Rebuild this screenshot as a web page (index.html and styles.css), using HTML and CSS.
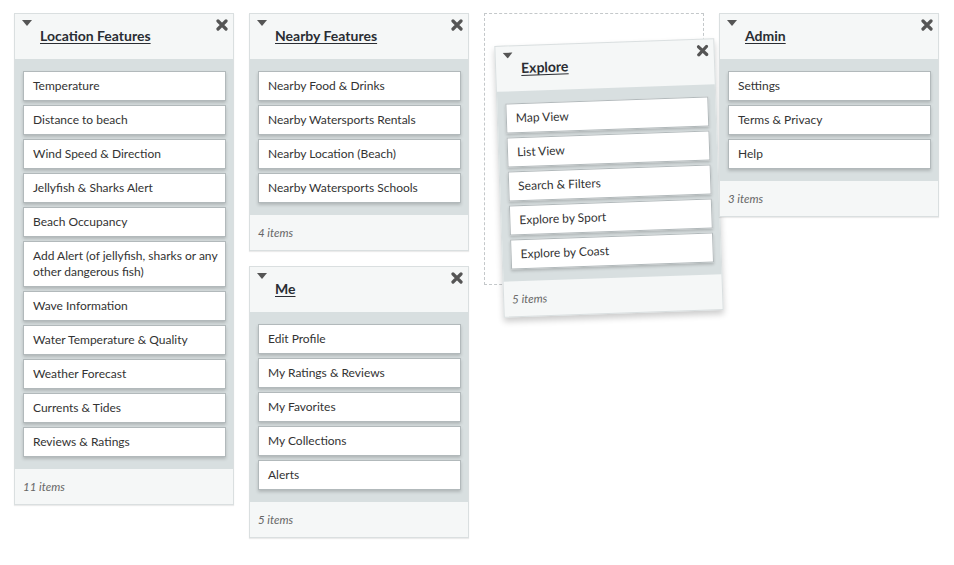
FILE: index.html
```html
<!DOCTYPE html>
<html lang="en">

<head>
    <meta charset="UTF-8">
    <meta name="viewport" content="width=device-width, initial-scale=1.0">
    <title>Beach App - Feature Board</title>
    <link rel="stylesheet" href="styles.css">
</head>

<body>
    <div class="board">
        <div class="column">
            <div class="card">
                <div class="card-head">
                    <svg class="caret" width="10" height="6" viewBox="0 0 10 6"><path d="M0 0H10L5 6Z" /></svg>
                    <a href="#" class="card-title">Location Features</a>
                    <svg class="close" width="12" height="12" viewBox="0 0 12 12"><path d="M2 2L10 10M10 2L2 10" /></svg>
                </div>
                <div class="card-body">
                    <div class="item">Temperature</div>
                    <div class="item">Distance to beach</div>
                    <div class="item">Wind Speed &amp; Direction</div>
                    <div class="item">Jellyfish &amp; Sharks Alert</div>
                    <div class="item">Beach Occupancy</div>
                    <div class="item">Add Alert (of jellyfish, sharks or any other dangerous fish)</div>
                    <div class="item">Wave Information</div>
                    <div class="item">Water Temperature &amp; Quality</div>
                    <div class="item">Weather Forecast</div>
                    <div class="item">Currents &amp; Tides</div>
                    <div class="item">Reviews &amp; Ratings</div>
                </div>
                <div class="card-foot">11 items</div>
            </div>
        </div>

        <div class="column">
            <div class="card">
                <div class="card-head">
                    <svg class="caret" width="10" height="6" viewBox="0 0 10 6"><path d="M0 0H10L5 6Z" /></svg>
                    <a href="#" class="card-title">Nearby Features</a>
                    <svg class="close" width="12" height="12" viewBox="0 0 12 12"><path d="M2 2L10 10M10 2L2 10" /></svg>
                </div>
                <div class="card-body">
                    <div class="item">Nearby Food &amp; Drinks</div>
                    <div class="item">Nearby Watersports Rentals</div>
                    <div class="item">Nearby Location (Beach)</div>
                    <div class="item">Nearby Watersports Schools</div>
                </div>
                <div class="card-foot">4 items</div>
            </div>

            <div class="card">
                <div class="card-head">
                    <svg class="caret" width="10" height="6" viewBox="0 0 10 6"><path d="M0 0H10L5 6Z" /></svg>
                    <a href="#" class="card-title">Me</a>
                    <svg class="close" width="12" height="12" viewBox="0 0 12 12"><path d="M2 2L10 10M10 2L2 10" /></svg>
                </div>
                <div class="card-body">
                    <div class="item">Edit Profile</div>
                    <div class="item">My Ratings &amp; Reviews</div>
                    <div class="item">My Favorites</div>
                    <div class="item">My Collections</div>
                    <div class="item">Alerts</div>
                </div>
                <div class="card-foot">5 items</div>
            </div>
        </div>

        <div class="column">
            <div class="placeholder"></div>
            <!-- card being dragged -->
            <div class="card dragging">
                <div class="card-head">
                    <svg class="caret" width="10" height="6" viewBox="0 0 10 6"><path d="M0 0H10L5 6Z" /></svg>
                    <a href="#" class="card-title">Explore</a>
                    <svg class="close" width="12" height="12" viewBox="0 0 12 12"><path d="M2 2L10 10M10 2L2 10" /></svg>
                </div>
                <div class="card-body">
                    <div class="item">Map View</div>
                    <div class="item">List View</div>
                    <div class="item">Search &amp; Filters</div>
                    <div class="item">Explore by Sport</div>
                    <div class="item">Explore by Coast</div>
                </div>
                <div class="card-foot">5 items</div>
            </div>
        </div>

        <div class="column">
            <div class="card">
                <div class="card-head">
                    <svg class="caret" width="10" height="6" viewBox="0 0 10 6"><path d="M0 0H10L5 6Z" /></svg>
                    <a href="#" class="card-title">Admin</a>
                    <svg class="close" width="12" height="12" viewBox="0 0 12 12"><path d="M2 2L10 10M10 2L2 10" /></svg>
                </div>
                <div class="card-body">
                    <div class="item">Settings</div>
                    <div class="item">Terms &amp; Privacy</div>
                    <div class="item">Help</div>
                </div>
                <div class="card-foot">3 items</div>
            </div>
        </div>
    </div>
</body>

</html>
```

FILE: styles.css
```css
body {
    margin: 0;
    font-family: 'Lato', 'Open Sans', sans-serif;
    background: #fff;
    color: #333;
}

.board {
    display: flex;
    align-items: flex-start;
    gap: 15px;
    padding: 13px 14px;
}

.column {
    position: relative;
    width: 220px;
    display: flex;
    flex-direction: column;
    gap: 15px;
}

.card {
    background: #f5f7f7;
    border: 1px solid #dadfe0;
    box-shadow: 0 1px 1px rgba(0, 0, 0, 0.08);
}

.card-head {
    display: flex;
    align-items: flex-start;
    height: 45px;
    box-sizing: border-box;
    padding: 5px 5px 0 7px;
}

.caret {
    margin-top: 1px;
    fill: #555;
}

.card-title {
    margin: 8px 0 0 8px;
    font-size: 14px;
    line-height: 18px;
    font-weight: bold;
    color: #2a2d33;
    text-decoration: underline;
    text-underline-offset: 2px;
}

.close {
    margin-left: auto;
    stroke: #555;
    stroke-width: 3.2;
    stroke-linecap: round;
}

.card-body {
    display: flex;
    flex-direction: column;
    gap: 4px;
    background: #d8dfe0;
    padding: 12px 7px 12px 8px;
}

.item {
    background: #fff;
    border: 1px solid #b2b9bb;
    box-shadow: 0 2px 3px rgba(0, 0, 0, 0.18);
    padding: 6px 5px 6px 9px;
    font-size: 12px;
    line-height: 16px;
    color: #333;
}

.card-foot {
    height: 35px;
    line-height: 35px;
    padding-left: 8px;
    font-size: 11.5px;
    font-style: italic;
    color: #666;
}

.placeholder {
    height: 270px;
    border: 1px dashed #c4c8ca;
}

.dragging {
    position: absolute;
    top: 29px;
    left: 15px;
    width: 218px;
    transform: rotate(-2deg);
    box-shadow: 0 4px 6px rgba(0, 0, 0, 0.2);
}
```
